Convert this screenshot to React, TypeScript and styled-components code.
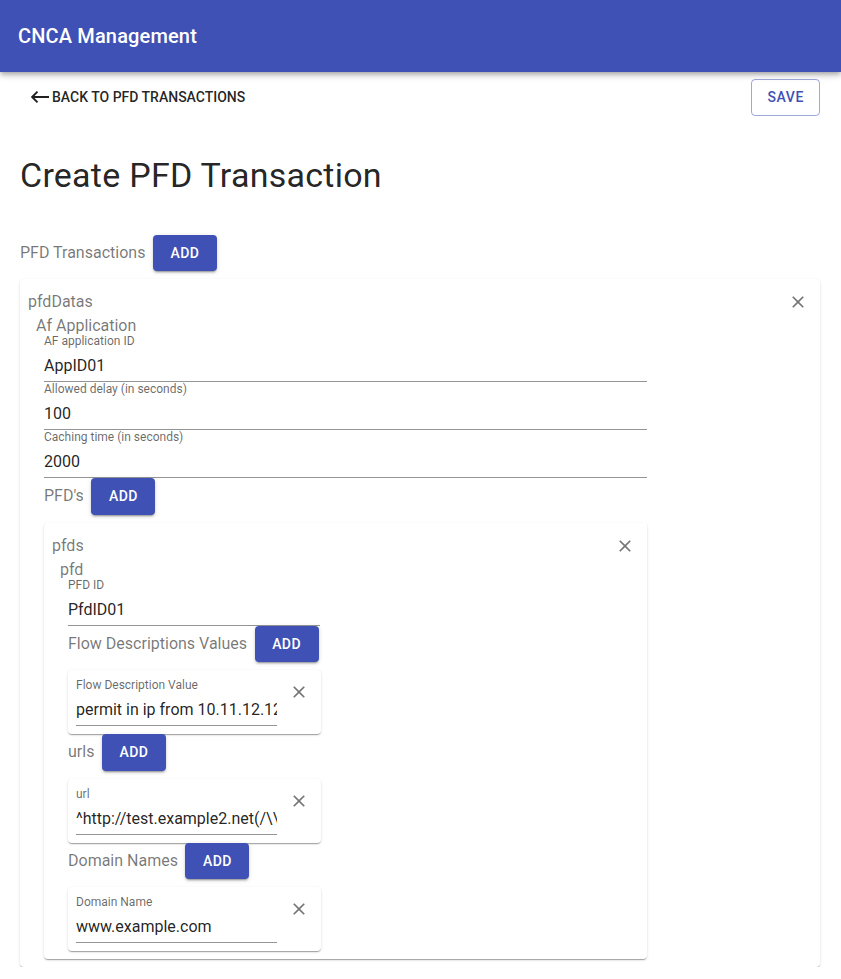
import React from 'react';
import styled, { createGlobalStyle } from 'styled-components';

const GlobalStyle = createGlobalStyle`
  html, body { margin: 0; padding: 0; background: #fff; }
  body {
    font-family: Roboto, "Noto Sans", "Liberation Sans", Arial, sans-serif;
    color: rgba(0, 0, 0, 0.87);
  }
  * { box-sizing: border-box; }
`;

const PRIMARY = '#3f51b5';

const AppBar = styled.header`
  position: relative;
  z-index: 2;
  height: 72px;
  display: flex;
  align-items: center;
  padding: 0 18px;
  background: ${PRIMARY};
  color: #fff;
  box-shadow: 0px 2px 4px -1px rgba(0, 0, 0, 0.2), 0px 4px 5px 0px rgba(0, 0, 0, 0.14),
    0px 1px 10px 0px rgba(0, 0, 0, 0.12);
`;

const AppTitle = styled.h6`
  margin: 0;
  font-size: 20px;
  font-weight: 500;
  line-height: 32px;
  letter-spacing: 0.15px;
`;

const Main = styled.main`
  padding: 0 21px 0 20px;
`;

const TopRow = styled.div`
  margin-top: 7px;
  display: flex;
  justify-content: space-between;
  align-items: center;
`;

const BackButton = styled.button`
  display: inline-flex;
  align-items: center;
  gap: 3px;
  padding: 6px 8px 6px 11px;
  border: 0;
  background: none;
  font-family: inherit;
  font-size: 14px;
  font-weight: 500;
  line-height: 24.5px;
  letter-spacing: 0;
  text-transform: uppercase;
  color: rgba(0, 0, 0, 0.87);
  cursor: pointer;
`;

const OutlinedButton = styled.button`
  padding: 5px 15px;
  border: 1px solid rgba(63, 81, 181, 0.5);
  border-radius: 4px;
  background: none;
  font-family: inherit;
  font-size: 14px;
  font-weight: 500;
  line-height: 24.5px;
  letter-spacing: 0.6px;
  text-transform: uppercase;
  color: ${PRIMARY};
  cursor: pointer;
`;

const PageTitle = styled.h1`
  margin: 38px 0 0;
  font-size: 34px;
  font-weight: 400;
  line-height: 42px;
  letter-spacing: 0.25px;
  color: rgba(0, 0, 0, 0.87);
`;

const ListRow = styled.div<{ $top?: number }>`
  display: flex;
  align-items: center;
  gap: 7.5px;
  margin-top: ${(p) => p.$top ?? 0}px;
`;

const ListLabel = styled.span`
  font-size: 16px;
  line-height: 24px;
  color: rgba(0, 0, 0, 0.54);
`;

const AddButton = styled.button`
  min-width: 64px;
  padding: 6px 16px;
  border: 0;
  border-radius: 4px;
  background: ${PRIMARY};
  color: #fff;
  font-family: inherit;
  font-size: 14px;
  font-weight: 500;
  line-height: 24.5px;
  letter-spacing: 0.4px;
  text-transform: uppercase;
  box-shadow: 0px 3px 1px -2px rgba(0, 0, 0, 0.2), 0px 2px 2px 0px rgba(0, 0, 0, 0.14),
    0px 1px 5px 0px rgba(0, 0, 0, 0.12);
  cursor: pointer;
`;

const Card = styled.section<{ $width?: number; $top?: number }>`
  width: ${(p) => (p.$width ? `${p.$width}px` : 'auto')};
  margin-top: ${(p) => p.$top ?? 0}px;
  padding: 11px 7px 8px 8px;
  background: #fff;
  border-radius: 4px;
  box-shadow: 0px 2px 1px -1px rgba(0, 0, 0, 0.2), 0px 1px 1px 0px rgba(0, 0, 0, 0.14),
    0px 1px 3px 0px rgba(0, 0, 0, 0.12);
`;

const CardHeader = styled.div`
  height: 24px;
  display: flex;
  justify-content: space-between;
  align-items: center;
`;

const SectionTitle = styled.span`
  font-size: 16px;
  line-height: 24px;
  color: rgba(0, 0, 0, 0.54);
`;

const CloseButton = styled.button<{ $offset?: number }>`
  flex: none;
  width: 30px;
  height: 30px;
  padding: 0;
  margin-top: ${(p) => p.$offset ?? 0}px;
  border: 0;
  border-radius: 50%;
  background: none;
  display: flex;
  align-items: center;
  justify-content: center;
  color: rgba(0, 0, 0, 0.54);
  cursor: pointer;
`;

const Indent = styled.div<{ $pull?: boolean }>`
  padding-left: 8px;
  margin-top: ${(p) => (p.$pull ? -4 : 0)}px;
`;

const FieldWrap = styled.div<{ $width: number }>`
  width: ${(p) => p.$width}px;
  display: flex;
  flex-direction: column;
`;

const FieldLabel = styled.label`
  display: block;
  height: 16px;
  font-size: 12px;
  line-height: 14px;
  color: rgba(0, 0, 0, 0.6);
  white-space: nowrap;
`;

const FieldInput = styled.input`
  display: block;
  width: 100%;
  height: 32px;
  padding: 4px 0;
  margin: 0;
  border: 0;
  border-bottom: 1px solid rgba(0, 0, 0, 0.42);
  outline: none;
  background: transparent;
  font-family: inherit;
  font-size: 16px;
  line-height: 23px;
  color: rgba(0, 0, 0, 0.87);
`;

const ItemCard = styled.div`
  width: 253px;
  margin-top: 8px;
  display: flex;
  align-items: flex-start;
  gap: 7px;
  padding: 8px 7px 8px 8px;
  background: #fff;
  border-radius: 4px;
  box-shadow: 0px 2px 1px -1px rgba(0, 0, 0, 0.2), 0px 1px 1px 0px rgba(0, 0, 0, 0.14),
    0px 1px 3px 0px rgba(0, 0, 0, 0.12);
`;

const CloseIcon = () => (
  <svg width="20" height="20" viewBox="0 0 24 24" fill="currentColor" aria-hidden="true">
    <path d="M19 6.41 17.59 5 12 10.59 6.41 5 5 6.41 10.59 12 5 17.59 6.41 19 12 13.41 17.59 19 19 17.59 13.41 12z" />
  </svg>
);

const BackArrow = () => (
  <svg width="18" height="12" viewBox="0 0 18 12" fill="none" aria-hidden="true">
    <path d="M1 6H18M6.5 0.7L1.2 6L6.5 11.3" stroke="currentColor" strokeWidth="1.9" />
  </svg>
);

type FieldProps = { label: string; value: string; width: number };
const Field = ({ label, value, width }: FieldProps) => (
  <FieldWrap $width={width}>
    <FieldLabel>{label}</FieldLabel>
    <FieldInput readOnly value={value} />
  </FieldWrap>
);

const Item = ({ label, value }: { label: string; value: string }) => (
  <ItemCard>
    <Field label={label} value={value} width={201} />
    <CloseButton $offset={-1} aria-label="remove">
      <CloseIcon />
    </CloseButton>
  </ItemCard>
);

export default function App() {
  return (
    <>
      <GlobalStyle />
      <AppBar>
        <AppTitle>CNCA Management</AppTitle>
      </AppBar>
      <Main>
        <TopRow>
          <BackButton>
            <BackArrow />
            Back to PFD Transactions
          </BackButton>
          <OutlinedButton>Save</OutlinedButton>
        </TopRow>
        <PageTitle>Create PFD Transaction</PageTitle>
        <ListRow $top={39}>
          <ListLabel>PFD Transactions</ListLabel>
          <AddButton>Add</AddButton>
        </ListRow>
        <Card $top={8}>
          <CardHeader>
            <SectionTitle>pfdDatas</SectionTitle>
            <CloseButton aria-label="remove">
              <CloseIcon />
            </CloseButton>
          </CardHeader>
          <Indent>
            <SectionTitle>Af Application</SectionTitle>
            <Indent $pull>
              <Field label="AF application ID" value="AppID01" width={603} />
              <Field label="Allowed delay (in seconds)" value="100" width={603} />
              <Field label="Caching time (in seconds)" value="2000" width={603} />
              <ListRow>
                <ListLabel>PFD's</ListLabel>
                <AddButton>Add</AddButton>
              </ListRow>
              <Card $width={603} $top={8}>
                <CardHeader>
                  <SectionTitle>pfds</SectionTitle>
                  <CloseButton aria-label="remove">
                    <CloseIcon />
                  </CloseButton>
                </CardHeader>
                <Indent>
                  <SectionTitle>pfd</SectionTitle>
                  <Indent $pull>
                    <Field label="PFD ID" value="PfdID01" width={252} />
                    <ListRow>
                      <ListLabel>Flow Descriptions Values</ListLabel>
                      <AddButton>Add</AddButton>
                    </ListRow>
                    <Item
                      label="Flow Description Value"
                      value="permit in ip from 10.11.12.123 80 to any"
                    />
                    <ListRow>
                      <ListLabel>urls</ListLabel>
                      <AddButton>Add</AddButton>
                    </ListRow>
                    <Item label="url" value="^http://test.example2.net(/\\S*)?$" />
                    <ListRow>
                      <ListLabel>Domain Names</ListLabel>
                      <AddButton>Add</AddButton>
                    </ListRow>
                    <Item label="Domain Name" value="www.example.com" />
                  </Indent>
                </Indent>
              </Card>
            </Indent>
          </Indent>
        </Card>
      </Main>
    </>
  );
}
